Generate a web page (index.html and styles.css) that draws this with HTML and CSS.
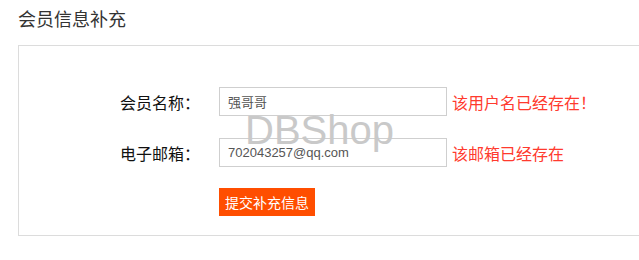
FILE: index.html
```html
<!DOCTYPE html>
<html lang="zh-CN">
<head>
<meta charset="utf-8">
<title>会员信息补充</title>
<link rel="stylesheet" href="styles.css">
</head>
<body>
<div class="page">
  <h2 class="title">会员信息补充</h2>
  <div class="panel">
    <form class="form">
      <div class="row">
        <label class="label">会员名称：</label>
        <input class="field" type="text" value="强哥哥">
        <span class="err">该用户名已经存在！</span>
      </div>
      <div class="row">
        <label class="label">电子邮箱：</label>
        <input class="field" type="text" value="702043257@qq.com">
        <span class="err">该邮箱已经存在</span>
      </div>
      <div class="row">
        <span class="label"></span>
        <button class="submit" type="button">提交补充信息</button>
      </div>
    </form>
    <div class="watermark">DBShop</div>
  </div>
</div>
</body>
</html>
```
FILE: styles.css
```css
html, body {
  margin: 0;
  padding: 0;
  background: #fff;
  overflow: hidden;
}
body {
  font-family: "Noto Sans CJK SC", sans-serif;
  color: #333;
}
.page {
  width: 660px;
}
.title {
  margin: 0;
  height: 45px;
  padding: 6px 0 0 18px;
  box-sizing: border-box;
  font-size: 18px;
  line-height: 24px;
  font-weight: normal;
  color: #333;
}
.panel {
  position: relative;
  margin-left: 18px;
  border: 1px solid #dcdcdc;
  padding: 41px 0 19px;
}
.form {
  display: flex;
  flex-direction: column;
  gap: 22px;
}
.row {
  display: flex;
  align-items: center;
  height: 29px;
}
.row:last-child {
  height: 28px;
  margin-top: -1px;
}
.label {
  width: 181px;
  text-align: right;
  font-size: 16px;
  color: #111;
  margin-right: 19px;
  flex: none;
}
.field {
  width: 228px;
  height: 29px;
  box-sizing: border-box;
  border: 1px solid #cfcfcf;
  padding: 0 8px;
  margin: 0;
  font-family: "Liberation Sans", "Noto Sans CJK SC", sans-serif;
  font-size: 13px;
  color: #555;
  background: transparent;
  outline: none;
}
.err {
  margin-left: 5px;
  font-size: 16px;
  color: #ff3a2e;
}
.submit {
  height: 28px;
  width: 96px;
  padding: 0;
  border: none;
  background: #ff4e00;
  color: #fff;
  font-family: "Noto Sans CJK SC", sans-serif;
  font-size: 14px;
  cursor: pointer;
}
.watermark {
  position: absolute;
  left: 226px;
  top: 64px;
  font-family: "Liberation Sans", Arial, sans-serif;
  font-size: 40px;
  line-height: 40px;
  color: #c9c9c9;
  pointer-events: none;
}
```
